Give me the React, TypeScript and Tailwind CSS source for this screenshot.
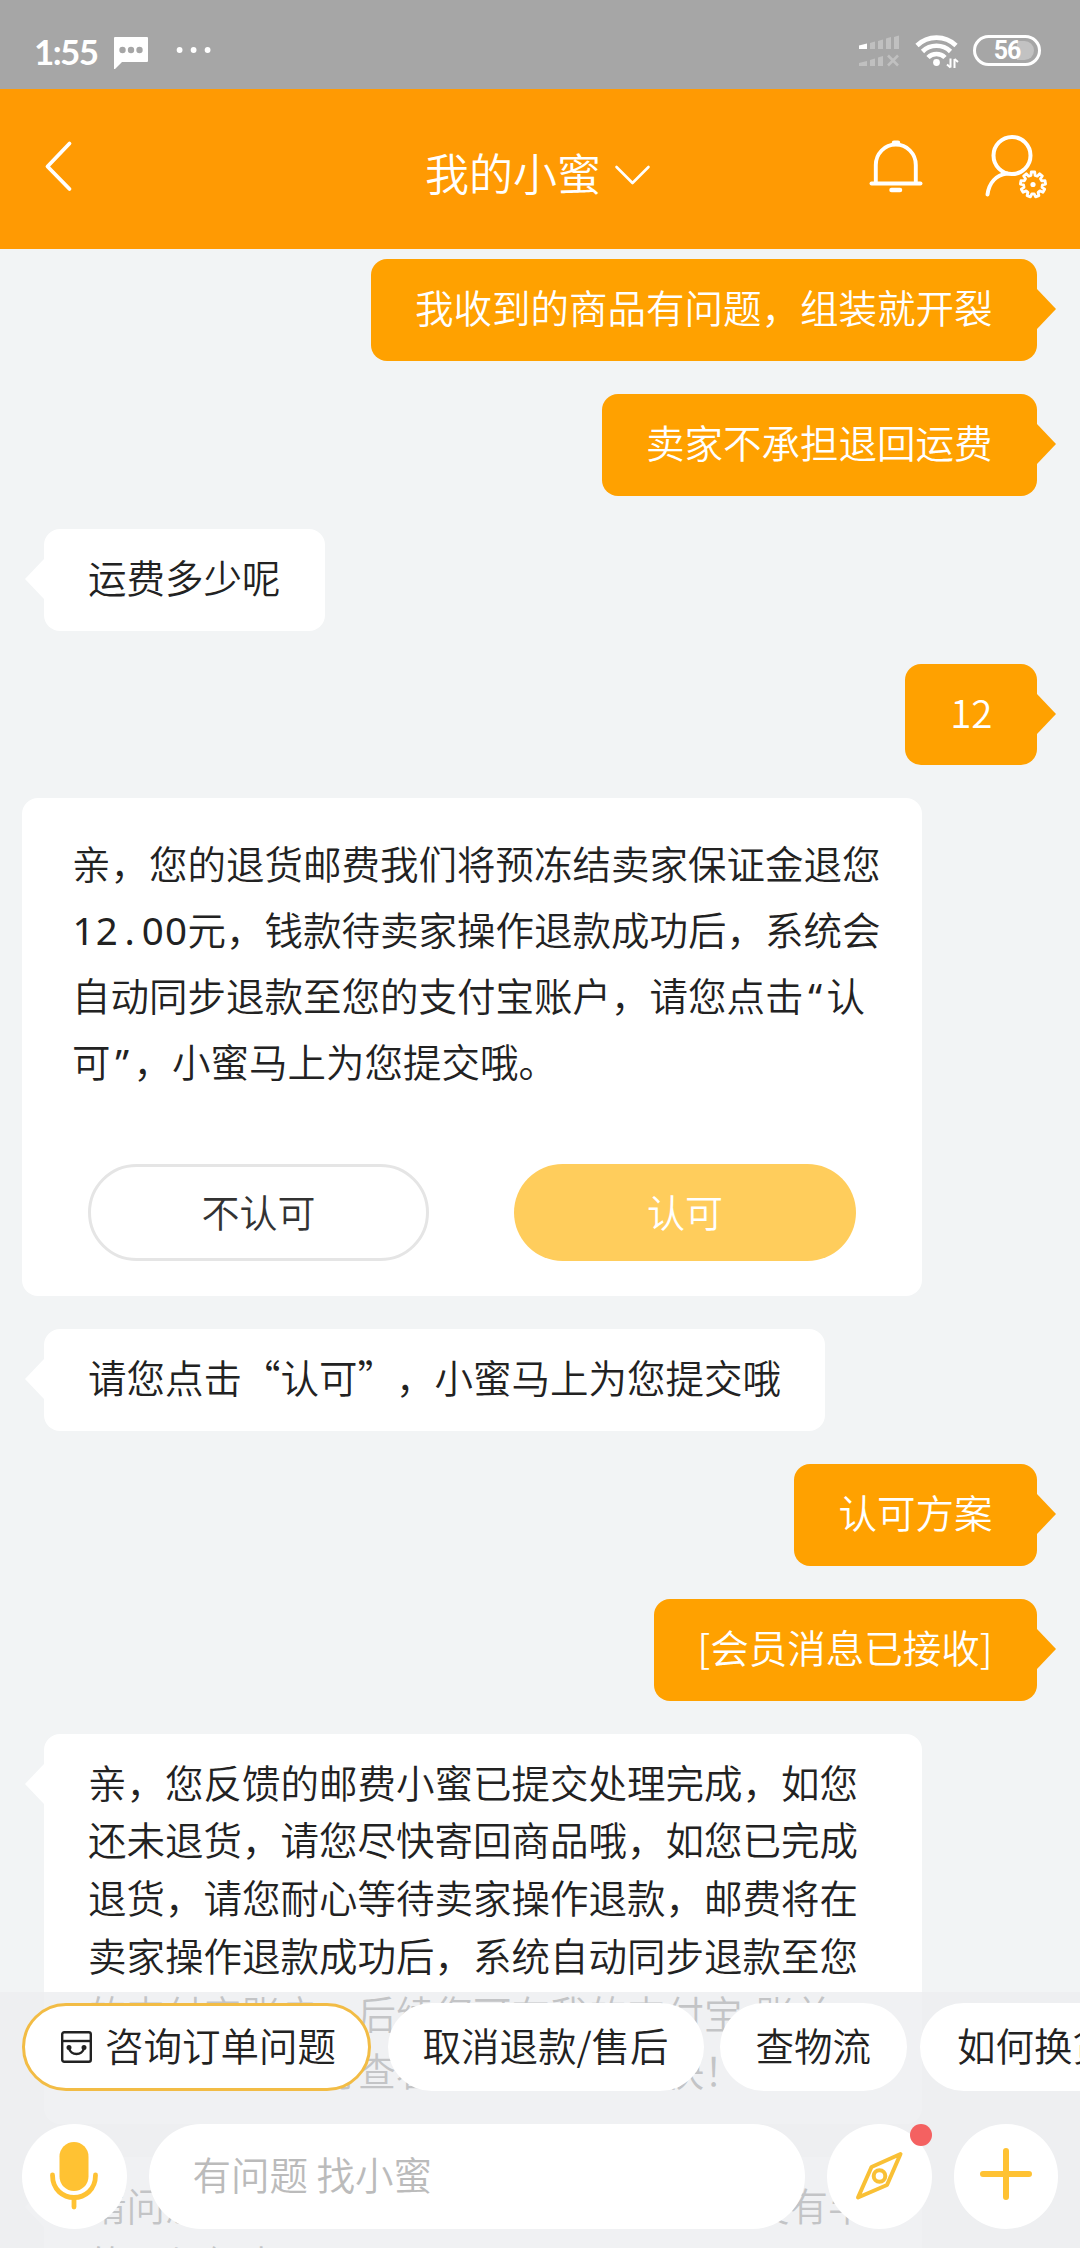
import React from "react";

const replyLines = [
  "亲，您反馈的邮费小蜜已提交处理完成，如您",
  "还未退货，请您尽快寄回商品哦，如您已完成",
  "退货，请您耐心等待卖家操作退款，邮费将在",
  "卖家操作退款成功后，系统自动同步退款至您",
  "的支付宝账户，后续您可在我的支付宝-账单",
  "详情明细中进行查看，祝您生活愉快！",
];

const nextLines = ["请问您对小蜜本次的服务是否满意 现在没有半", "的更与组本"];

// outline of the small cog beside the user icon
const cogPath = (cx: number, cy: number, teeth: number, outer: number, inner: number) => {
  const step = (Math.PI * 2) / teeth;
  const points: string[] = [];
  for (let i = 0; i < teeth; i++) {
    const a = i * step - Math.PI / 2;
    [
      [a - step * 0.32, inner],
      [a - step * 0.2, outer],
      [a + step * 0.2, outer],
      [a + step * 0.32, inner],
    ].forEach(([t, r]) => points.push(`${(cx + Math.cos(t) * r).toFixed(2)} ${(cy + Math.sin(t) * r).toFixed(2)}`));
  }
  return `M${points.join("L")}Z`;
};

const StatusBar = () => {
  return (
    <div className="h-[89px] shrink-0 bg-[#a6a6a6] flex items-start text-white">
      <span className="ml-[34px] mt-[31px] w-[80px] font-[Lato] font-bold text-[35px] leading-[40px] tracking-[-1.600px]">
        1:55
      </span>
      <svg className="mt-[37px]" width="34" height="32" viewBox="0 0 34 32">
        <path d="M1 0h32a1 1 0 0 1 1 1v23a1 1 0 0 1-1 1H8l-7 7H0V1a1 1 0 0 1 1-1z" fill="#fff" />
        <g fill="#a6a6a6">
          <circle cx="8.5" cy="13" r="3.2" />
          <circle cx="17" cy="13" r="3.2" />
          <circle cx="25.5" cy="13" r="3.2" />
        </g>
      </svg>
      <svg className="mt-[46px] ml-[28px]" width="36" height="8" viewBox="0 0 36 8" fill="#fff">
        <circle cx="3.6" cy="4" r="2.9" />
        <circle cx="17.6" cy="4" r="2.9" />
        <circle cx="31.6" cy="4" r="2.9" />
      </svg>
      <svg className="ml-auto mt-[35px]" width="42" height="32" viewBox="0 0 42 32" fill="#c0c0c0">
        <path d="M1 10.500l8-2v5.500h-8z" fill="#fff" />
        <path d="M12 8l5-1.500V14h-5zM20 6l5-1.500V14h-5zM28 3.500l5-1.500v12h-5zM36 2l5-1.500V14h-5z" />
        <path d="M1 28l8-2v5H1zM12 25l5-1.500V31h-5zM20 22.500l5-1.500v10h-5z" />
        <path d="M30 20.500l10 10M40 20.500l-10 10" stroke="#c0c0c0" strokeWidth="2.600" />
      </svg>
      <svg className="ml-[15px] mt-[34px]" width="44" height="35" viewBox="0 0 44 35" fill="none" stroke="#fff" strokeWidth="4.600">
        <path d="M2 11.500a28 28 0 0 1 39 0" />
        <path d="M7.500 17.500a20 20 0 0 1 28 0" />
        <path d="M13 23.500a12 12 0 0 1 17 0" />
        <circle cx="21.500" cy="28.500" r="3.400" fill="#fff" stroke="none" />
        <path d="M35.500 24.500v9M39.500 34v-9" strokeWidth="2" />
        <path d="M32 30.500l3.500 3M43 28l-3.500-3" strokeWidth="2" />
      </svg>
      <div className="ml-[14px] mr-[39px] mt-[35px] w-[68px] h-[31px] rounded-full border-[3px] border-white relative flex items-center justify-center">
        <span className="absolute right-[4px] top-[3px] h-[19px] w-[17px] rounded-r-full bg-[#c2c2c2]" />
        <span className="relative font-[Roboto] font-bold text-[25px] leading-none tracking-[-1px]">56</span>
      </div>
    </div>
  );
};

const Header = () => {
  return (
    <header className="h-[160px] shrink-0 bg-[#ff9a03] flex items-start text-white">
      <svg className="ml-[44px] mt-[51px]" width="30" height="52" viewBox="0 0 30 52" fill="none" stroke="#fff" strokeWidth="3.800" strokeLinecap="round" strokeLinejoin="round">
        <path d="M25.500 3.500L3.500 26.500l22 22.500" />
      </svg>
      <h1 className="ml-[351px] mt-[51px] text-[44px] leading-[64px]">我的小蜜</h1>
      <svg className="ml-[13px] mt-[75px]" width="37" height="22" viewBox="0 0 37 22" fill="none" stroke="#fff" strokeWidth="2.600" strokeLinecap="round" strokeLinejoin="round">
        <path d="M2.500 3L18.500 19l16-16" />
      </svg>
      <svg className="ml-[218px] mt-[50px]" width="54" height="56" viewBox="0 0 54 56" fill="none" stroke="#fff" strokeWidth="3.900" strokeLinecap="round">
        <path d="M2.500 44.500h49" />
        <path d="M6.800 44V26a20 20.500 0 0 1 40 0v18" />
        <path d="M25 3.800h4" strokeWidth="4.500" />
        <path d="M22.500 51h8.500" strokeWidth="4.500" />
      </svg>
      <svg className="ml-[61px] mt-[45px]" width="66" height="68" viewBox="0 0 66 68" fill="none" stroke="#fff" strokeWidth="4" strokeLinecap="round">
        <circle cx="28" cy="21.500" r="18.500" />
        <path d="M3.500 60.500C5 49 12 41 23 39.500" />
        <path d={cogPath(49, 50.500, 9, 12.600, 9.400)} strokeWidth="2.800" strokeLinejoin="round" />
        <circle cx="49" cy="50.500" r="2.600" fill="#fff" stroke="none" />
      </svg>
    </header>
  );
};

const UserBubble = ({ children }: { children: React.ReactNode }) => {
  return (
    <div className="relative self-end mr-[43.500px] min-w-[132px] rounded-[16px] bg-[#ffa100] px-[44px] pt-[19px] pb-[25px] text-right text-white leading-[57.750px] whitespace-nowrap">
      {children}
      <svg className="absolute left-full top-[30px] -ml-px" width="20" height="40" viewBox="0 0 20 40">
        <path d="M0 0h1L20 20 1 40H0z" fill="#ffa100" />
      </svg>
    </div>
  );
};

const BotBubble = ({ children, wide }: { children: React.ReactNode; wide?: boolean }) => {
  return (
    <div
      className={
        "relative self-start ml-[44px] rounded-[16px] bg-white px-[44px] pt-[19px] pb-[25px] leading-[57.750px] whitespace-nowrap " +
        (wide ? "w-[878px]" : "")
      }
    >
      <svg className="absolute right-full top-[30px] -mr-px" width="20" height="40" viewBox="0 0 20 40">
        <path d="M20 0h-1L0 20l19 20h1z" fill="#fff" />
      </svg>
      {children}
    </div>
  );
};

// half-width characters take a fixed cell inside the card text
const Mono = ({ text }: { text: string }) => {
  return (
    <span className="font-['Noto_Sans'] font-normal">
      {text.split("").map((c, i) => (
        <span key={i} className="inline-block w-[23.100px] text-center">
          {c}
        </span>
      ))}
    </span>
  );
};

const ConfirmCard = () => {
  return (
    <div className="self-start ml-[22px] w-[900px] h-[498px] rounded-[16px] bg-white pt-[31px] pl-[50px]">
      <div className="leading-[66px] whitespace-nowrap">
        <p>亲，您的退货邮费我们将预冻结卖家保证金退您</p>
        <p className="h-[66px]">
          <Mono text="12.00" />
          元，钱款待卖家操作退款成功后，系统会
        </p>
        <p className="h-[66px]">
          自动同步退款至您的支付宝账户，请您点击
          <Mono text="“" />认
        </p>
        <p className="h-[66px]">
          可
          <Mono text="”" />
          ，小蜜马上为您提交哦。
        </p>
      </div>
      <div className="mt-[71px] ml-[16px] flex gap-[85px] text-[38px]">
        <button className="w-[341px] h-[97px] rounded-full border-[3px] border-[#e5e5e5] text-[#333] pb-[4px]">不认可</button>
        <button className="w-[342px] h-[97px] rounded-full bg-[#ffcd5c] text-white pb-[4px]">认可</button>
      </div>
    </div>
  );
};

const Chips = () => {
  return (
    <div className="flex gap-[16.500px] pl-[22px] whitespace-nowrap">
      <div className="h-[88px] w-[349px] shrink-0 rounded-full bg-white border-[3px] border-[#f2bc45] flex items-center pl-[36px] pb-[4px]">
        <svg className="mr-[13px] mt-[4px]" width="31" height="32" viewBox="0 0 31 32" fill="none" stroke="#222" strokeWidth="2.400">
          <rect x="1.200" y="1.200" width="28.600" height="29.600" rx="2" />
          <path d="M1 10h29" />
          <path d="M8 17c1.500 8 13.500 8 15 0" strokeLinecap="round" />
          <circle cx="8" cy="16.500" r="1.300" fill="#222" />
          <circle cx="23" cy="16.500" r="1.300" fill="#222" />
        </svg>
        咨询订单问题
      </div>
      <div className="h-[88px] shrink-0 rounded-full bg-white px-[35px] flex items-center pb-[4px]">取消退款/售后</div>
      <div className="h-[88px] shrink-0 rounded-full bg-white px-[35.500px] flex items-center pb-[4px]">查物流</div>
      <div className="h-[88px] shrink-0 -ml-[3px] rounded-full bg-white px-[37px] flex items-center pb-[4px]">如何换货</div>
    </div>
  );
};

const InputBar = () => {
  return (
    <div className="mt-[33px] px-[22px] flex gap-[22px]">
      <div className="size-[104.500px] shrink-0 rounded-full bg-white flex items-center justify-center">
        <svg width="50" height="70" viewBox="0 0 50 70" fill="none" stroke="#ffc233" strokeWidth="4.800" strokeLinecap="round">
          <rect x="10.500" y="1" width="29" height="49" rx="14.500" fill="#ffc233" stroke="none" />
          <path d="M3.500 34c0 30 43 30 43 0" />
          <path d="M25 57v9" />
        </svg>
      </div>
      <div className="grow h-[104.500px] rounded-full bg-white pl-[44px] flex items-center text-[#bbb] pb-[4px]">有问题 找小蜜</div>
      <div className="relative size-[104.500px] shrink-0 rounded-full bg-white flex items-center justify-center">
        <svg width="50" height="50" viewBox="0 0 50 50" fill="none" stroke="#f9c035" strokeWidth="4" strokeLinejoin="round">
          <path d="M46.500 3L17.500 16 4 46.500l29-12.500z" />
          <circle cx="25.500" cy="25" r="5.800" />
        </svg>
        <span className="absolute right-0 top-0 size-[22px] rounded-full bg-[#f46161]" />
      </div>
      <div className="size-[104.500px] shrink-0 rounded-full bg-white flex items-center justify-center pb-[5px]">
        <svg width="54" height="54" viewBox="0 0 54 54" fill="none" stroke="#ffc233" strokeWidth="6" strokeLinecap="round">
          <path d="M27 4v46M4 27h46" />
        </svg>
      </div>
    </div>
  );
};

const App = () => {
  return (
    <div
      lang="zh-CN"
      className="relative w-[1080px] h-[2248px] overflow-hidden bg-[#f2f4f5] flex flex-col font-['Noto_Sans_CJK_SC',sans-serif] font-[350] text-[38.500px] text-[#222] [text-spacing-trim:space-all]"
    >
      <StatusBar />
      <Header />
      <main className="pt-[10.300px] flex flex-col gap-[33px]">
        <UserBubble>我收到的商品有问题，组装就开裂</UserBubble>
        <UserBubble>卖家不承担退回运费</UserBubble>
        <BotBubble>运费多少呢</BotBubble>
        <UserBubble>12</UserBubble>
        <ConfirmCard />
        <BotBubble>请您点击“认可”，小蜜马上为您提交哦</BotBubble>
        <UserBubble>认可方案</UserBubble>
        <UserBubble>[会员消息已接收]</UserBubble>
        <BotBubble wide>
          {replyLines.map((line) => (
            <p key={line}>{line}</p>
          ))}
        </BotBubble>
        <BotBubble wide>
          {nextLines.map((line) => (
            <p key={line}>{line}</p>
          ))}
        </BotBubble>
      </main>
      <footer className="absolute inset-x-0 bottom-0 h-[256px] bg-[#ecedf0]/80 pt-[11px]">
        <Chips />
        <InputBar />
      </footer>
    </div>
  );
};

export default App;
